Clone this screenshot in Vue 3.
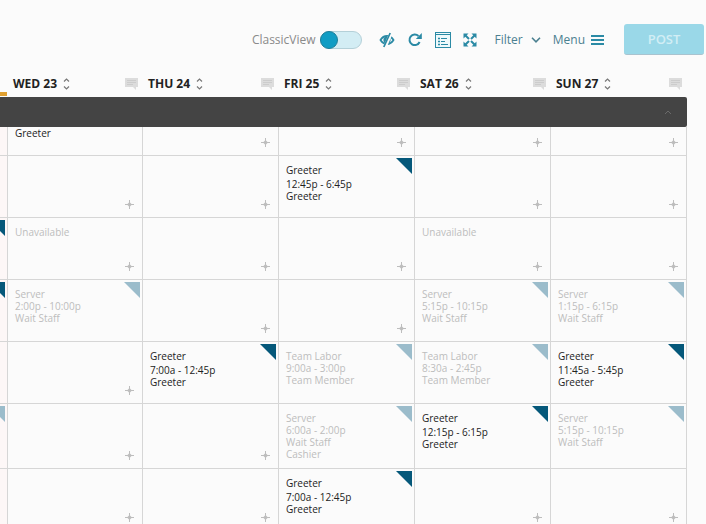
<template>
    <div class="page">
        <header class="toolbar">
            <label class="classic" for="classic-view">ClassicView</label>
            <input id="classic-view" v-model="classicView" class="switch" type="checkbox" />
            <div class="tools">
                <button class="tool" type="button" aria-label="Hide shifts">
                    <svg width="16" height="16" viewBox="0 0 16 16">
                        <path d="M1.500 8C3.200 5.200 5.400 4 8 4s4.800 1.200 6.500 4C12.800 10.800 10.600 12 8 12S3.200 10.800 1.500 8z" fill="none" stroke="#2b8aa5" stroke-width="1.800" />
                        <circle cx="8" cy="8" r="3.600" fill="#2b8aa5" />
                        <path d="M12.200 .800L6 15" stroke="#fbfbfb" stroke-width="3.400" />
                        <path d="M11.200 1L4.800 15" stroke="#2b8aa5" stroke-width="1.700" />
                    </svg>
                </button>
                <button class="tool" type="button" aria-label="Refresh">
                    <svg width="16" height="16" viewBox="0 0 16 16">
                        <path d="M12.600 10A5.300 5.300 0 1 1 11.500 4" fill="none" stroke="#2b8aa5" stroke-width="2" />
                        <path d="M14.800 1v6H8.800z" fill="#2b8aa5" />
                    </svg>
                </button>
                <button class="tool" type="button" aria-label="List">
                    <svg width="16" height="16" viewBox="0 0 16 16" stroke="#2b8aa5">
                        <rect x=".5" y=".5" width="15" height="15" fill="#eef9fb" />
                        <path d="M1 2.500h14M6 6.500h6M6 9.500h4M6 12.500h7" />
                        <path d="M3 6.500h2M3 9.500h2M3 12.500h2" stroke-width="1.500" />
                    </svg>
                </button>
                <button class="tool" type="button" aria-label="Full screen">
                    <svg width="14" height="14" viewBox="0 0 14 14">
                        <path d="M.500 .500h5l-5 5z M13.500 .500v5l-5-5z M.500 13.500v-5l5 5z M13.500 13.500h-5l5-5z" fill="#2b8aa5" />
                        <path d="M2 2l4 4M12 2L8 6M2 12l4-4M12 12L8 8" stroke="#2b8aa5" stroke-width="2" />
                    </svg>
                </button>
            </div>
            <button class="text-button filter" type="button">
                Filter
                <svg width="10" height="6" viewBox="0 0 10 6"><path d="M1 .800l4 4 4-4" fill="none" stroke="#4b8090" stroke-width="1.600" /></svg>
            </button>
            <button class="text-button" type="button">
                Menu
                <svg width="13" height="10" viewBox="0 0 13 10"><path d="M0 1h13M0 5h13M0 9h13" stroke="#2b8aa5" stroke-width="2" /></svg>
            </button>
            <button class="post" type="button">POST</button>
        </header>

        <table class="schedule">
            <thead>
                <tr>
                    <th class="edge"><span class="today"></span></th>
                    <th v-for="day in days" :key="day" class="heading" scope="col">
                        <div class="day">
                            <span>{{ day }}</span>
                            <svg class="sort" width="7" height="12" viewBox="0 0 7 12">
                                <path d="M1 3.500L3.500 1 6 3.500M1 8.500L3.500 11 6 8.500" fill="none" stroke="#777" stroke-width="1.200" />
                            </svg>
                            <svg class="note" width="13" height="12" viewBox="0 0 13 12">
                                <path d="M0 0h13v9h-2v3L8 9H0z" fill="#dcdcdc" />
                                <path d="M2 2.500h9M2 4.500h9M2 6.500h6" stroke="#cccccc" />
                            </svg>
                        </div>
                    </th>
                </tr>
            </thead>
            <tbody>
                <tr>
                    <td class="section" colspan="6">
                        <button class="collapse" type="button" aria-label="Collapse section">
                            <svg width="8" height="6" viewBox="0 0 8 6"><path d="M1 5l3-3 3 3" fill="none" stroke="#6a6a6a" /></svg>
                        </button>
                    </td>
                </tr>
                <tr v-for="(row, index) in rows" :key="index" :class="row.size">
                    <td class="edge">
                        <span v-if="row.edge" class="corner" :class="row.edge"></span>
                    </td>
                    <td v-for="(cell, i) in row.cells" :key="i" class="cell">
                        <div v-if="cell.lines" class="shift" :class="cell.type">
                            <div v-for="line in cell.lines" :key="line.id">{{ line.text }}</div>
                        </div>
                        <span v-if="cell.corner" class="corner" :class="cell.type"></span>
                        <button v-if="cell.add" class="add" type="button" aria-label="Add shift">
                            <svg width="9" height="9" viewBox="0 0 9 9">
                                <path d="M0 4.500h9M4.500 0v9" stroke="#bdbdbd" />
                                <path d="M4.500 2L7 4.500 4.500 7 2 4.500z" fill="#bdbdbd" />
                            </svg>
                        </button>
                    </td>
                </tr>
            </tbody>
        </table>
    </div>
</template>

<script setup>
import { ref } from 'vue';

const classicView = ref(false);
const days = ['WED 23', 'THU 24', 'FRI 25', 'SAT 26', 'SUN 27'];

function toLines(texts) {
    return texts.map((text, id) => ({ id, text }));
}

// Shift of this schedule
function own(...texts) {
    return { type: 'own', lines: toLines(texts), corner: true };
}

// Shift that belongs to another schedule
function other(...texts) {
    return { type: 'other', lines: toLines(texts), corner: true };
}

const empty = { add: true };
const off = { type: 'other', lines: toLines(['Unavailable']), add: true };

const rows = [
    // Last line of the row that is scrolled under the section bar
    { size: 'partial', cells: [{ type: 'own', lines: toLines(['Greeter']) }, empty, empty, empty, empty] },
    { cells: [empty, empty, own('Greeter', '12:45p - 6:45p', 'Greeter'), empty, empty] },
    { edge: 'own', cells: [off, empty, empty, off, empty] },
    {
        edge: 'own',
        cells: [
            other('Server', '2:00p - 10:00p', 'Wait Staff'),
            empty,
            empty,
            other('Server', '5:15p - 10:15p', 'Wait Staff'),
            other('Server', '1:15p - 6:15p', 'Wait Staff'),
        ],
    },
    {
        cells: [
            empty,
            own('Greeter', '7:00a - 12:45p', 'Greeter'),
            other('Team Labor', '9:00a - 3:00p', 'Team Member'),
            other('Team Labor', '8:30a - 2:45p', 'Team Member'),
            own('Greeter', '11:45a - 5:45p', 'Greeter'),
        ],
    },
    {
        edge: 'other',
        size: 'tall',
        cells: [
            empty,
            empty,
            other('Server', '6:00a - 2:00p', 'Wait Staff', 'Cashier'),
            own('Greeter', '12:15p - 6:15p', 'Greeter'),
            other('Server', '5:15p - 10:15p', 'Wait Staff'),
        ],
    },
    { cells: [empty, empty, own('Greeter', '7:00a - 12:45p', 'Greeter'), empty, empty] },
];
</script>

<style>
body {
    background: #fbfbfb;
}
</style>

<style scoped>
.page {
    height: 100vh;
    overflow: hidden;
    font-family: "Open Sans", sans-serif;
    color: #222;
}

button {
    padding: 0;
    border: 0;
    background: none;
    font-family: inherit;
    cursor: pointer;
}

svg {
    display: block;
}

.toolbar {
    display: flex;
    align-items: center;
    justify-content: flex-end;
    padding: 24px 2px 17px 0;
}

.classic {
    margin-right: 4px;
    font-size: 12px;
    color: #8a8a8a;
}

.switch {
    appearance: none;
    box-sizing: border-box;
    width: 42px;
    height: 18px;
    margin: 0 17px 0 0;
    border: 1px solid #b4d0d8;
    border-radius: 9px;
    background: #d3edf4;
    cursor: pointer;
}

.switch::before {
    content: "";
    display: block;
    box-sizing: border-box;
    width: 18px;
    height: 18px;
    margin: -1px;
    border: 1px solid #1f7f99;
    border-radius: 50%;
    background: #119dc4;
}

.switch:checked::before {
    margin-left: 23px;
}

.tools {
    display: flex;
    align-items: center;
    gap: 12px;
    margin-right: 18px;
}

.text-button {
    display: flex;
    align-items: center;
    gap: 6px;
    margin-right: 20px;
    font-size: 12px;
    color: #4b8090;
}

.filter {
    gap: 8px;
    margin-right: 12px;
}

.post {
    width: 80px;
    height: 31px;
    border-bottom: 1px solid #a9c3cf;
    border-radius: 3px;
    background: #9ad8e8;
    font-size: 13px;
    font-weight: 600;
    color: #d2eef5;
}

.schedule {
    width: calc(100% - 19px);
    table-layout: fixed;
    border-spacing: 0;
}

th {
    height: 25px;
    padding: 0;
    vertical-align: top;
}

th.edge {
    width: 8px;
    vertical-align: bottom;
}

th.edge + .heading {
    width: 135px;
}

.today {
    display: block;
    width: 7px;
    height: 4px;
    margin-bottom: 1px;
    background: #e0a030;
}

.day {
    display: flex;
    align-items: center;
    gap: 6px;
    padding: 3px 5px 0;
    font-size: 12px;
    font-weight: 700;
    line-height: 18px;
    white-space: nowrap;
}

.note {
    margin-left: auto;
}

td {
    box-sizing: border-box;
    position: relative;
    height: 62px;
    padding: 0;
    border-right: 1px solid #d6d6d6;
    border-bottom: 1px solid #d6d6d6;
    vertical-align: top;
}

td.section {
    height: 30px;
    padding-right: 15px;
    border: 0;
    border-radius: 0 2px 2px 0;
    background: #444;
    vertical-align: middle;
}

.collapse {
    display: block;
    margin-left: auto;
}

td.edge {
    overflow: hidden;
    background: #fdf7f7;
}

td.cell {
    padding: 8px 7px 0;
}

.partial td {
    height: 29px;
}

.partial .cell {
    padding-top: 0;
}

.tall td {
    height: 65px;
}

.shift {
    font-size: 10px;
    line-height: 12px;
    white-space: nowrap;
}

.shift.own div:first-child:not(:last-child) {
    margin-bottom: 2px;
}

.shift.other {
    color: #bdbdbd;
}

.corner {
    position: absolute;
    top: 2px;
    right: 2px;
    width: 16px;
    height: 16px;
    clip-path: polygon(0 0, 100% 0, 100% 100%);
}

.corner.own {
    background: #05587a;
}

.corner.other {
    background: #9bbccb;
}

.add {
    position: absolute;
    right: 8px;
    bottom: 8px;
}
</style>
